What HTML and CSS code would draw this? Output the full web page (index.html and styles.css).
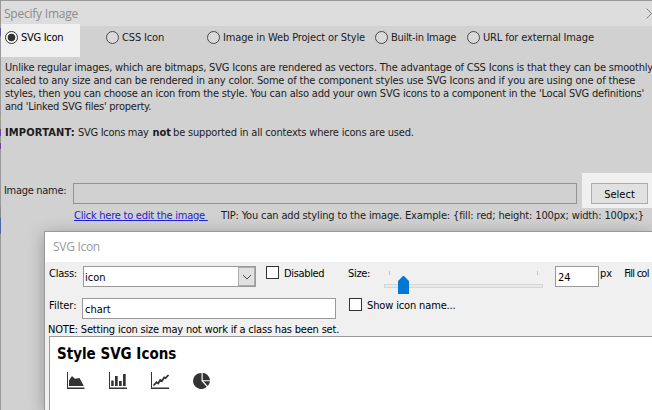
FILE: index.html
```html
<!DOCTYPE html>
<html lang="en">
<head>
<meta charset="utf-8">
<title>Specify Image</title>
<link rel="stylesheet" href="styles.css">
</head>
<body>
<main class="window">
  <header class="titlebar">
    <span class="title">Specify Image</span>
    <svg class="close" width="11" height="11" viewBox="0 0 11 11"><path d="M.5.5l10 10M10.5.5l-10 10"/></svg>
  </header>
  <div class="modes">
    <label class="mode selected"><i class="radio on"></i><span class="ls-30">SVG Icon</span></label>
    <label class="mode"><i class="radio"></i><span class="ls-16">CSS Icon</span></label>
    <label class="mode"><i class="radio"></i><span class="ls-14">Image in Web Project or Style</span></label>
    <label class="mode"><i class="radio"></i><span class="ls-30">Built-in Image</span></label>
    <label class="mode"><i class="radio"></i><span class="ls-16">URL for external Image</span></label>
  </div>
  <section class="description">
    <p class="ls-18">Unlike regular images, which are bitmaps, SVG Icons are rendered as vectors. The advantage of CSS Icons is that they can be smoothly</p>
    <p class="ls-17">scaled to any size and can be rendered in any color. Some of the component styles use SVG Icons and if you are using one of these</p>
    <p class="ls-20">styles, then you can choose an icon from the style. You can also add your own SVG icons to a component in the 'Local SVG definitions'</p>
    <p class="ls-24">and 'Linked SVG files' property.</p>
    <p class="important"><b class="wide">IMPORTANT:</b><span class="ls-30">SVG Icons may</span><b>not</b><span class="ls-18">be supported in all contexts where icons are used.</span></p>
  </section>
  <div class="image-row">
    <label class="image-label ls-30">Image name:</label>
    <div class="image-input"></div>
    <div class="select-area"><button class="select"><span>Select</span></button></div>
  </div>
  <div class="hint">
    <a class="ls-24">Click here to edit the image&nbsp;</a>
    <span class="ls-15">TIP: You can add styling to the image. Example: {fill: red; height: 100px; width: 100px;}</span>
  </div>
</main>
<section class="dialog">
  <header class="dialog-title"><span>SVG Icon</span></header>
  <div class="controls">
    <label class="ls-24">Class:</label>
    <div class="combo"><span>icon</span><i class="drop"><svg width="10" height="6" viewBox="0 0 10 6"><path d="M1 1l4 4 4-4"/></svg></i></div>
    <label class="check disabled"><i class="box"></i><span class="ls-35">Disabled</span></label>
    <label class="ls-30">Size:</label>
    <svg class="slider" width="160" height="30" viewBox="0 0 160 30">
      <path class="tick" d="M5.500 5v4M153.500 5v4"/>
      <rect class="track" x=".5" y="18.500" width="158" height="3"/>
      <path class="thumb" d="M14 28V15l5-5h1l5 5v13z"/>
    </svg>
    <div class="field number">24</div>
    <label>px</label>
    <label class="fill-label">Fill col</label>
  </div>
  <div class="filter">
    <label>Filter:</label>
    <div class="field">chart</div>
    <label class="check"><i class="box"></i><span class="ls-14">Show icon name...</span></label>
  </div>
  <p class="note ls-19">NOTE: Setting icon size may not work if a class has been set.</p>
  <div class="results">
    <h2>Style SVG Icons</h2>
    <div class="icons">
      <svg viewBox="0 0 20 18"><path d="M0 0h1v15.500H17.500V17H0zM2 14V8.500l1.200-2L5 4l2.800 2.700 2-.2L12.500 6l4.300 8z"/></svg>
      <svg viewBox="0 0 20 18"><path d="M0 0h1v15.500H18V17H0zM2.200 14V8.500h2.500v5.500zM6 14V4h2.700v10zM10 14V9h2.700v5zM14 14V2h2.700v12z"/></svg>
      <svg viewBox="0 0 20 18"><path d="M0 0h1v15.500H18V17H0z"/><path class="trend" d="M2.500 13.500l3-3.200 1.700 1.200 2-3.500 1.700 1 2.300-3.500 1.300.7L17.500 3"/></svg>
      <svg viewBox="0 0 20 18"><path d="M8.500 1v8l5.200 5.700A8 8 0 1 1 8.500 1zM9.700.8a8 8 0 0 1 7.300 7.400H9.700zM10.500 9.300H17a8 8 0 0 1-2.300 4.600z"/></svg>
    </div>
  </div>
</section>
</body>
</html>
```
FILE: styles.css
```css
* { box-sizing: border-box; }
body {
  margin: 0; width: 652px; height: 410px; overflow: hidden;
  /* strip of the desktop visible beside the window */
  background: linear-gradient(#999 0 18px, #aa8d62 18px 20px, #999 20px 28px, #62559a 28px 36px, #999 36px 116px, #a9a276 116px 120px, #999 120px 129px, #6845a0 129px 136px, #999 136px 143px, #6845a0 143px 149px, #999 149px 207px, #8b8c8c 207px 218px, #4d69a5 218px 234px, #999 234px);
  color: #1c1c1c; font: 11px/13px "DejaVu Sans Condensed", "DejaVu Sans", sans-serif;
  white-space: nowrap;
}
p, h2 { margin: 0; }
.ls-14 { letter-spacing: -.14px; }
.ls-15 { letter-spacing: -.15px; }
.ls-16 { letter-spacing: -.16px; }
.ls-17 { letter-spacing: -.17px; }
.ls-18 { letter-spacing: -.184px; }
.ls-19 { letter-spacing: -.19px; }
.ls-20 { letter-spacing: -.205px; }
.ls-24 { letter-spacing: -.24px; }
.ls-30 { letter-spacing: -.3px; }
.ls-35 { letter-spacing: -.35px; }
.wide { letter-spacing: .17px; }

.window { height: 410px; margin-left: 1px; border-top: 1px solid #989898; background: #d1d1d1; overflow: hidden; }
.titlebar {
  display: flex; justify-content: space-between; height: 25px; padding: 4px 0 0 3px;
  background: #ddd; color: #8c8c8c; font: 12px/17px "Open Sans", sans-serif; letter-spacing: -.23px;
}
.close { flex: none; margin: 3px -5px 0 0; fill: none; stroke: #858585; }
.modes { display: grid; grid-template-columns: 101px 101px 168px 92px 1fr; height: 31px; margin-top: -2px; }
.mode { display: flex; align-items: flex-start; gap: 3px; padding: 7px 0 0 4px; }
.selected { width: 79px; height: 33px; background: #f0f0f0; color: #000; }
.radio { width: 13px; height: 13px; border: 1px solid #4a4a4a; border-radius: 50%; background: #dadada; }
.radio.on { border-color: #333; background: radial-gradient(circle, #333 3.5px, #f8f8f8 4.200px); }

.description { padding: 6px 0 0 4px; height: 84px; }
.important { display: flex; margin-top: 13px; }
.important .wide { width: 73px; }
.important .ls-30 { width: 74.500px; }
.important b + .ls-18 { margin-left: 2px; }

.image-row { display: flex; margin-top: 34px; height: 35px; }
.image-label { width: 72px; padding: 11px 0 0 3px; }
.image-input { width: 504px; height: 21px; margin-top: 10px; border: 1px solid #939393; }
.select-area { width: 70px; margin-left: 5px; padding: 10px 0 0 9px; background: #f0f0f0; }
.select { display: block; width: 57px; height: 21px; padding: 1px 0 0; border: 1px solid #adadad; background: #e1e1e1; color: #000; font: inherit; }
.hint { display: flex; padding: 1px 0 0 73px; }
.hint a { width: 147px; color: #2020d8; text-decoration: underline; }

.dialog {
  position: absolute; left: 44px; top: 231px; width: 608px; height: 179px; overflow: hidden;
  border: solid #999; border-width: 1px 0 0 1px; background: #f0f0f0; color: #000; box-shadow: 0 3px 16px rgba(0,0,0,.28);
}
.dialog-title { height: 30px; padding: 7px 0 0 8px; background: #fff; color: #999; font: 12px/16px "Open Sans", sans-serif; letter-spacing: -.29px; }
.controls { display: flex; height: 36px; padding: 4px 0 0 4px; }
.controls > label { flex: none; }
.controls > label:first-child { width: 34px; padding-top: 1px; }
.combo { flex: none; display: flex; justify-content: space-between; width: 173px; height: 21px; border: 1px solid #999; background: #fff; }
.combo span { padding: 4px 0 0 1px; }
.drop { display: flex; align-items: center; justify-content: center; width: 17px; border: 1px solid #adadad; background: #e1e1e1; }
.drop svg { fill: none; stroke: #444; }
.check { display: flex; gap: 5px; align-items: flex-start; }
.box { flex: none; width: 13px; height: 13px; border: 1px solid #333; background: #fff; }
.disabled { width: 81px; margin-left: 10px; }
.check span, .controls > label { padding-top: 1px; }
.controls > .disabled { padding-top: 0; }
.disabled + label { width: 37px; margin-left: 1px; }
.slider { flex: none; margin: 0 11px 0 -1px; }
.tick { stroke: #c4c4c4; }
.track { fill: #e7eaea; stroke: #d6d6d6; }
.thumb { fill: #0078d7; }
.field { flex: none; height: 21px; padding: 4px 2px 0; border: 1px solid #999; background: #fff; }
.number { width: 44px; margin-right: 1px; }
.controls .fill-label { width: 27px; margin-left: 12px; letter-spacing: -.75px; }
.filter { display: flex; height: 25px; padding-left: 4px; }
.filter > label:first-child { width: 33px; padding-top: 1px; }
.filter .field { width: 254px; margin-right: 13px; }
.note { padding-left: 3px; height: 13px; }
.results { height: 74px; margin-left: 4px; border: solid #999; border-width: 1px 0 0 1px; background: #fff; padding: 7px 7px 0; }
.results h2 { font-size: 15px; line-height: 20px; }
.icons { display: flex; gap: 22px; padding: 8px 0 0 10px; }
.icons svg { width: 20px; height: 18px; fill: #333; }
.icons .trend { fill: none; stroke: #333; stroke-width: 1.800; }
```
